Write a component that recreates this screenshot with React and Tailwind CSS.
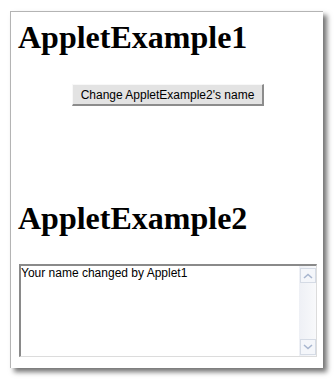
import React from "react";

const Chevron = ({ up }) => (
  <svg width="10" height="6" viewBox="0 0 10 6">
    <path
      d={up ? "M1 5 L5 1.5 L9 5" : "M1 1 L5 4.5 L9 1"}
      fill="none"
      stroke="#a8b6cf"
      strokeWidth="1.6"
    />
  </svg>
);

const App = () => {
  return (
    <div className="w-[335px] h-[380px] bg-white pt-[11px] pl-[10px]">
      <div className="w-[313px] h-[357px] bg-white border-t border-l border-[#b4b4b4] shadow-[4px_4px_5px_rgba(0,0,0,0.55)] pt-[7px] pl-[7px]">
        <h1
          className="m-0 text-[32px] leading-[36px] font-bold text-black"
          style={{ fontFamily: '"Liberation Serif", "Times New Roman", serif' }}
        >
          AppletExample1
        </h1>
        <div className="flex justify-center mt-[29px] pr-[5px]">
          <button
            className="h-[22px] w-[192px] bg-[#e3e3e3] border-t border-l border-[#f8f8f8] border-r-2 border-b-2 border-r-[#8c8c8c] border-b-[#8c8c8c] text-[12px] leading-[18px] text-black"
            style={{ fontFamily: '"Liberation Sans", Arial, sans-serif' }}
          >
            Change AppletExample2's name
          </button>
        </div>
        <h1
          className="m-0 mt-[94px] text-[32px] leading-[36px] font-bold text-black"
          style={{ fontFamily: '"Liberation Serif", "Times New Roman", serif' }}
        >
          AppletExample2
        </h1>
        <div className="mt-[28px] ml-px w-[298px] h-[93px] flex border-t-2 border-l-2 border-[#8a8a8a] border-r border-b border-r-[#dcdcdc] border-b-[#dcdcdc] bg-white">
          <div
            className="flex-1 text-[12px] leading-[14px] text-black"
            style={{ fontFamily: '"Liberation Sans", Arial, sans-serif' }}
          >
            Your name changed by Applet1
          </div>
          <div className="w-[17px] flex flex-col justify-between pt-[2px] pb-px pl-px bg-gradient-to-r from-[#eef0f5] to-[#f8f9fb]">
            <div className="w-[16px] h-[15px] border border-[#d5dbe5] bg-[#f4f6fa] flex items-center justify-center">
              <Chevron up />
            </div>
            <div className="w-[16px] h-[16px] border border-[#d5dbe5] bg-[#f4f6fa] flex items-center justify-center">
              <Chevron />
            </div>
          </div>
        </div>
      </div>
    </div>
  );
};

export default App;
